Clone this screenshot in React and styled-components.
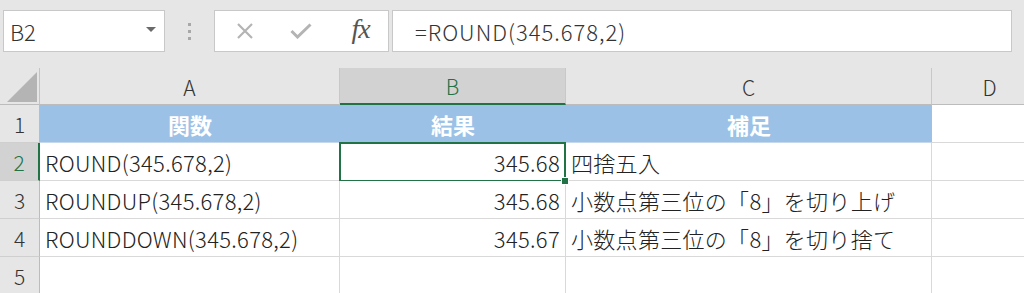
import React from "react";
import styled, { createGlobalStyle } from "styled-components";

const GREEN = "#217346";
const FONT = `"Noto Sans CJK JP", "Noto Sans", sans-serif`;

const Global = createGlobalStyle`
  html, body { margin: 0; padding: 0; background: #ffffff; }
  body { font-family: ${FONT}; overflow: hidden; }
`;

const Page = styled.div`
  width: 1024px;
  height: 293px;
  overflow: hidden;
  background: #ffffff;
`;

const Toolbar = styled.div`
  height: 68px;
  background: #e6e6e6;
  display: flex;
  align-items: flex-start;
  padding: 10px 12px 0 3px;
  box-sizing: border-box;
`;

const Box = styled.div`
  height: 42px;
  box-sizing: border-box;
  background: #ffffff;
  border: 1px solid #c8c8c8;
  display: flex;
  align-items: center;
`;

const NameBox = styled(Box)`
  width: 162px;
  padding: 0 8px 0 6px;
  justify-content: space-between;
  font-size: 22px;
  font-weight: 300;
  color: #333;
`;

const Caret = styled.span`
  width: 0;
  height: 0;
  border-left: 5px solid transparent;
  border-right: 5px solid transparent;
  border-top: 5px solid #6a6a6a;
  margin-top: -4px;
`;

const Grip = styled.div`
  width: 49px;
  height: 42px;
  display: flex;
  flex-direction: column;
  align-items: center;
  justify-content: center;
  gap: 4px;
  & > i {
    width: 3px;
    height: 3px;
    background: #a8a8a8;
    display: block;
  }
`;

const ButtonBox = styled(Box)`
  width: 175px;
  padding: 0 0 0 20px;
`;

const IconBtn = styled.span`
  width: ${(p) => p.$w}px;
  display: flex;
  align-items: center;
  justify-content: center;
`;

const Fx = styled.span`
  font-family: "Liberation Serif", "DejaVu Serif", serif;
  font-style: italic;
  font-size: 28px;
  color: #555;
  letter-spacing: -1px;
  margin-top: -4px;
  margin-left: 3px;
`;

const FormulaBox = styled(Box)`
  flex: 1;
  margin-left: 3px;
  padding-left: 22px;
  font-size: 22px;
  font-weight: 300;
  letter-spacing: 1px;
  color: #333;
`;

const Sheet = styled.div`
  display: grid;
  grid-template-columns: 40px 300px 226px 366px 116px;
  grid-template-rows: 37px repeat(5, 38px);
  font-size: 22px;
  color: #222;
`;

const Corner = styled.div`
  background: #e6e6e6;
  border-right: 1px solid #c4c4c4;
  border-bottom: 1px solid #bcbcbc;
  position: relative;
  svg { position: absolute; left: 6px; bottom: 1px; }
`;

const ColHead = styled.div`
  background: ${(p) => (p.$active ? "#d2d2d2" : "#e6e6e6")};
  color: ${(p) => (p.$active ? GREEN : "#333")};
  border-right: 1px solid #c8c8c8;
  border-bottom: ${(p) => (p.$active ? `2px solid ${GREEN}` : "1px solid #bcbcbc")};
  display: flex;
  align-items: center;
  justify-content: center;
  font-size: 21px;
  font-weight: 300;
  padding-top: 1px;
`;

const RowHead = styled.div`
  background: ${(p) => (p.$active ? "#d2d2d2" : "#e6e6e6")};
  color: ${(p) => (p.$active ? GREEN : "#333")};
  border-right: ${(p) => (p.$active ? `2px solid ${GREEN}` : "1px solid #bcbcbc")};
  border-bottom: 1px solid #cfcfcf;
  display: flex;
  align-items: center;
  justify-content: center;
  font-size: 21px;
  font-weight: 300;
`;

const Cell = styled.div`
  position: relative;
  background: ${(p) => (p.$head ? "#9bc2e6" : "#ffffff")};
  color: ${(p) => (p.$head ? "#ffffff" : "#222")};
  font-weight: ${(p) => (p.$head ? 700 : 300)};
  border-right: ${(p) => (p.$head ? "none" : "1px solid #d9d9d9")};
  border-bottom: 1px solid ${(p) => (p.$head ? "#c6d9ec" : "#d9d9d9")};
  display: flex;
  align-items: center;
  justify-content: ${(p) =>
    p.$align === "right" ? "flex-end" : p.$align === "center" ? "center" : "flex-start"};
  padding: 0 5px;
  letter-spacing: ${(p) => (p.$head ? "0" : "0.3px")};
  white-space: nowrap;
  overflow: visible;
  box-sizing: border-box;

  ${(p) =>
    p.$selected &&
    `
    &::after {
      content: "";
      position: absolute;
      left: -1px; top: -1px; right: -1px; bottom: -2px;
      border: 2px solid ${GREEN};
      pointer-events: none;
    }
    &::before {
      content: "";
      position: absolute;
      right: -4px; bottom: -5px;
      width: 6px; height: 6px;
      background: ${GREEN};
      border: 1px solid #fff;
      z-index: 2;
    }
  `}
`;

const rows = [
  { head: true, a: "関数", b: "結果", c: "補足" },
  { a: "ROUND(345.678,2)", b: "345.68", c: "四捨五入", selected: true },
  { a: "ROUNDUP(345.678,2)", b: "345.68", c: "小数点第三位の「8」を切り上げ" },
  { a: "ROUNDDOWN(345.678,2)", b: "345.67", c: "小数点第三位の「8」を切り捨て" },
  { a: "", b: "", c: "" },
];

export default function App() {
  return (
    <Page>
      <Global />
      <Toolbar>
        <NameBox>
          <span>B2</span>
          <Caret />
        </NameBox>
        <Grip>
          <i />
          <i />
          <i />
        </Grip>
        <ButtonBox>
          <IconBtn $w={20}>
            <svg width="18" height="16" viewBox="0 0 18 16">
              <path d="M2 1 L16 15 M16 1 L2 15" stroke="#b4b4b4" strokeWidth="2.2" fill="none" />
            </svg>
          </IconBtn>
          <IconBtn $w={92}>
            <svg width="22" height="16" viewBox="0 0 22 16">
              <path d="M1.5 8 L7.5 14 L20.5 1.5" stroke="#b4b4b4" strokeWidth="3" fill="none" />
            </svg>
          </IconBtn>
          <IconBtn $w={24}>
            <Fx>fx</Fx>
          </IconBtn>
        </ButtonBox>
        <FormulaBox>=ROUND(345.678,2)</FormulaBox>
      </Toolbar>
      <Sheet>
        <Corner>
          <svg width="32" height="32" viewBox="0 0 32 32">
            <polygon points="1,31 31,31 31,1" fill="#b4b4b4" />
          </svg>
        </Corner>
        <ColHead>A</ColHead>
        <ColHead $active>B</ColHead>
        <ColHead>C</ColHead>
        <ColHead>D</ColHead>
        {rows.map((r, i) => (
          <React.Fragment key={i}>
            <RowHead $active={i === 1}>{i + 1}</RowHead>
            <Cell $head={r.head} $align={r.head ? "center" : "left"}>{r.a}</Cell>
            <Cell $head={r.head} $align={r.head ? "center" : "right"} $selected={r.selected}>
              {r.b}
            </Cell>
            <Cell $head={r.head} $align={r.head ? "center" : "left"}>{r.c}</Cell>
            <Cell />
          </React.Fragment>
        ))}
      </Sheet>
    </Page>
  );
}
